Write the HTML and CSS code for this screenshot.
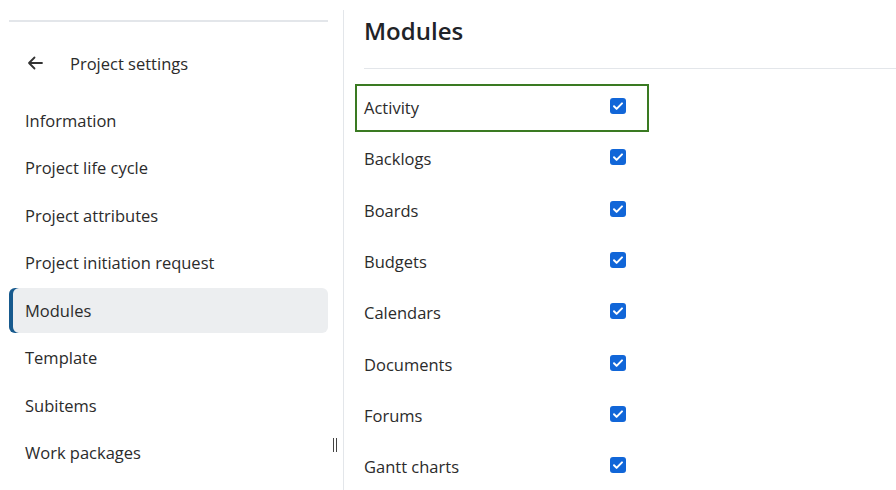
FILE: index.html
```html
<!DOCTYPE html>
<html lang="en">
<head>
  <meta charset="UTF-8">
  <title>Project settings – Modules</title>
  <link rel="stylesheet" href="styles.css">
</head>
<body>
  <div class="layout">
    <!-- Sidebar -->
    <aside class="sidebar">
      <div class="sidebar-top"></div>
      <div class="back-row">
        <svg class="back-icon" width="16" height="14" viewBox="0 0 16 14">
          <path d="M15 7H2M7.5 1.5L2 7l5.5 5.5" fill="none" stroke="#333" stroke-width="1.8" stroke-linecap="round" stroke-linejoin="round"/>
        </svg>
        <span>Project settings</span>
      </div>
      <nav class="menu">
        <a class="menu-item">Information</a>
        <a class="menu-item">Project life cycle</a>
        <a class="menu-item">Project attributes</a>
        <a class="menu-item">Project initiation request</a>
        <a class="menu-item active">Modules</a>
        <a class="menu-item">Template</a>
        <a class="menu-item">Subitems</a>
        <a class="menu-item">Work packages</a>
      </nav>
      <div class="resize-handle"></div>
    </aside>

    <!-- Main content -->
    <main class="content">
      <h1 class="page-title">Modules</h1>
      <ul class="module-list">
        <li class="module-row highlighted"><span>Activity</span><span class="checkbox"></span></li>
        <li class="module-row"><span>Backlogs</span><span class="checkbox"></span></li>
        <li class="module-row"><span>Boards</span><span class="checkbox"></span></li>
        <li class="module-row"><span>Budgets</span><span class="checkbox"></span></li>
        <li class="module-row"><span>Calendars</span><span class="checkbox"></span></li>
        <li class="module-row"><span>Documents</span><span class="checkbox"></span></li>
        <li class="module-row"><span>Forums</span><span class="checkbox"></span></li>
        <li class="module-row"><span>Gantt charts</span><span class="checkbox"></span></li>
      </ul>
    </main>
  </div>
</body>
</html>
```

FILE: styles.css
```css
:root {
  --text: #2b2b2b;
  --heading: #1f2328;
  --line: #e3e6ea;
  --active-bg: #eceef0;
  --accent: #175a8e;
  --check: #1166d8;
  --frame: #3a7a22;
  --font: 'Open Sans', 'Noto Sans', sans-serif;
}

html, body {
  margin: 0;
  padding: 0;
  background: #fff;
  font-family: var(--font);
  color: var(--text);
  overflow: hidden;
}

.layout {
  display: flex;
  height: 490px;
}

/* SIDEBAR */
.sidebar {
  position: relative;
  width: 343px;
  flex: 0 0 343px;
  box-sizing: border-box;
  padding: 20px 15px 0 9px;
}
.sidebar-top {
  border-top: 2px solid var(--line);
}
.back-row {
  display: flex;
  align-items: center;
  height: 44px;
  margin-top: 19px;
  padding-left: 18px;
  font-size: 16.5px;
}
.back-icon {
  margin-right: 27px;
}
.menu {
  display: flex;
  flex-direction: column;
  gap: 3px;
  margin-top: 13px;
}
.menu-item {
  display: flex;
  align-items: center;
  height: 44.5px;
  padding-left: 16px;
  border-radius: 6px;
  font-size: 16.5px;
  color: var(--text);
}
.menu-item.active {
  background: var(--active-bg);
  box-shadow: inset 4px 0 0 var(--accent);
}
.resize-handle {
  position: absolute;
  left: 333px;
  top: 438px;
  width: 1.5px;
  height: 14px;
  border-left: 1.5px solid #444;
  border-right: 1.5px solid #444;
}

/* CONTENT */
.content {
  flex: 1;
  margin-top: 10px;
  padding-left: 20px;
  border-left: 1px solid var(--line);
}
.page-title {
  margin: 0;
  padding: 3px 0 19px;
  line-height: 36px;
  font-size: 24px;
  font-weight: 600;
  color: var(--heading);
  border-bottom: 1px solid var(--line);
}
.module-list {
  list-style: none;
  margin: 13px 0 0 -9px;
  padding: 0;
}
.module-row {
  position: relative;
  display: flex;
  align-items: center;
  justify-content: space-between;
  width: 294px;
  height: 51.33px;
  box-sizing: border-box;
  padding: 0 23px 0 9px;
  font-size: 16.5px;
  color: var(--text);
}
.module-row.highlighted::after {
  content: "";
  position: absolute;
  left: 0;
  right: 0;
  top: 1.7px;
  bottom: 1.6px;
  border: 2.5px solid var(--frame);
}
.checkbox {
  width: 16px;
  height: 16px;
  margin-top: -3px;
  border-radius: 3px;
  background: var(--check) url("data:image/svg+xml,%3Csvg xmlns='http://www.w3.org/2000/svg' viewBox='0 0 16 16'%3E%3Cpath d='M4 8.3l2.6 2.6L12 5.4' fill='none' stroke='%23fff' stroke-width='2' stroke-linecap='round' stroke-linejoin='round'/%3E%3C/svg%3E") center / 16px 16px no-repeat;
}
```
